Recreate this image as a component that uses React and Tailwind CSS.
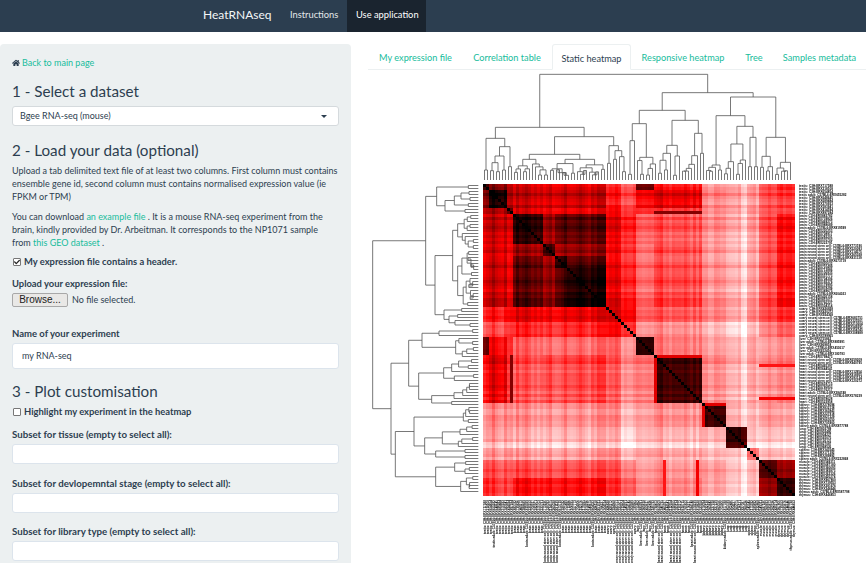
import { FaHome, FaCheck } from "react-icons/fa"

// small seeded generator so the heatmap stays the same between runs
let seed = 1234
const rnd = () => {
    seed = (seed * 16807) % 2147483647
    return seed / 2147483647
}

const CUTS = [0, 2, 8, 10, 20, 24, 28, 41, 51, 57, 73, 81, 88, 92, 98, 104]
const M = [
    [.95, .8, .7, .62, .6, .6, .6, .45, .85, .5, .25, .22, .25, .4, .5],
    [.8, .97, .7, .62, .6, .62, .62, .45, .52, .55, .25, .2, .22, .35, .42],
    [.7, .7, .85, .58, .55, .55, .55, .5, .45, .42, .25, .2, .25, .35, .4],
    [.62, .62, .58, .92, .7, .82, .82, .52, .32, .33, .22, .15, .2, .35, .5],
    [.6, .6, .55, .7, .9, .7, .72, .5, .3, .36, .22, .15, .2, .35, .5],
    [.6, .62, .55, .82, .7, .94, .85, .5, .3, .34, .22, .15, .2, .35, .5],
    [.6, .62, .55, .82, .72, .85, .95, .52, .3, .36, .22, .15, .2, .35, .5],
    [.45, .45, .5, .52, .5, .5, .52, .55, .3, .3, .22, .14, .22, .33, .42],
    [.85, .52, .45, .32, .3, .3, .3, .3, .93, .27, .2, .15, .2, .2, .25],
    [.5, .55, .42, .33, .36, .34, .36, .3, .27, .86, .22, .14, .18, .2, .25],
    [.25, .25, .25, .22, .22, .22, .22, .22, .2, .22, .88, .15, .15, .2, .2],
    [.22, .2, .2, .15, .15, .15, .15, .14, .15, .14, .15, .9, .12, .12, .12],
    [.25, .22, .25, .2, .2, .2, .2, .22, .2, .18, .15, .12, .3, .15, .15],
    [.4, .35, .35, .35, .35, .35, .35, .33, .2, .2, .2, .12, .15, .85, .72],
    [.5, .42, .4, .5, .5, .5, .5, .42, .25, .25, .2, .12, .15, .72, .93],
]

const segOf = (i) => CUTS.findIndex((c, k) => i >= c && i < CUTS[k + 1])

const bias = Array.from({ length: 104 }, (_, i) => (rnd() - 0.5) * (i < 51 ? 0.13 : 0.09))
bias[86] = -0.07
bias[87] = -0.09
bias[59] = 0.07
for (let i = 46; i < 51; i++) bias[i] -= 0.1

const heatColor = (v) => {
    const t = Math.max(0, Math.min(1, v))
    if (t <= 0.5) {
        const g = Math.round(255 * (1 - t / 0.5))
        return `rgb(255,${g},${g})`
    }
    return `rgb(${Math.round(255 * (1 - (t - 0.5) / 0.5))},0,0)`
}

const cellValue = (i, j) => {
    if (i === j) return 1
    const a = Math.min(i, j)
    const b = Math.max(i, j)
    if ((a === 71 || a === 60) && b >= 92) return a === 71 ? 0.52 : 0.46
    if (a === 9 && b >= 57 && b < 73) return 0.74
    const si = segOf(i)
    const sj = segOf(j)
    // the d2 and e blocks have a red rim on their top and left
    if (si === sj && (si === 9 || si === 10) && a === CUTS[si]) return 0.56
    const extra = si === sj ? (bias[i] + bias[j]) * 0.8 : bias[i] + bias[j]
    return M[si][sj] + extra
}

const cells = []
for (let r = 0; r < 104; r++) {
    for (let c = 0; c < 104; c++) {
        cells.push({ r, c, fill: heatColor(cellValue(r, c)) })
    }
}

// dendrogram, heights are in "depth" units, 450 is the leaf line
const auto = (n, parent) => {
    if (n === 1) return 1
    if (n === 2) return [418 + rnd() * 18, 1, 1]
    const top = parent + 8 + rnd() * Math.max(0, (425 - parent) * 0.45)
    const k = 1 + Math.floor(rnd() * (n - 1))
    return [top, auto(k, top), auto(n - k, top)]
}

const TREE = [133,
    [292,
        [325, [420, 1, 1], [350, [378, [398, [422, 1, 1], [425, 1, 1]], [420, 1, 1]], [410, 1, 1]]],
        [320,
            [373, [388, auto(6, 388), auto(6, 388)], [388, auto(9, 388), auto(10, 388)]],
            [347, [400, 1, 1], [362, [388, 1, 1], [380, 1, [425, 1, 1]]]],
        ],
    ],
    [188,
        [241,
            [281, [332, [433, 1, 1], 1], [382, auto(3, 382), auto(4, 382)]],
            [271,
                [346, [370, auto(4, 370), 1], [378, auto(2, 378), 1]],
                [310, [377, auto(5, 377), 1], [370, 1, 1]],
            ],
        ],
        [201,
            [257,
                [405, [412, auto(3, 412), 1], [420, 1, 1]],
                [289,
                    [342, [395, auto(3, 395), 1], [390, auto(3, 390), 1]],
                    [322, [410, 1, 1], [410, 1, 1]],
                ],
            ],
            [322,
                [379, [412, 1, 1], [410, auto(2, 410), 1]],
                [397, auto(5, 397), 1],
            ],
        ],
    ],
]

const toTop = (pos, d) => [484.5 + 3 * pos, 30 + d / 3]
const toLeft = (pos, d) => [365 + (d - 110) / 3, 185.5 + 3 * pos]

const buildTree = () => {
    const links = []
    let leaf = 0
    const walk = (node) => {
        if (node === 1) return { pos: leaf++, d: 450 }
        const a = walk(node[1])
        const b = walk(node[2])
        links.push([a, b, node[0]])
        return { pos: (a.pos + b.pos) / 2, d: node[0] }
    }
    walk(TREE)
    return links
}
const treeLinks = buildTree()

const treePath = (map) =>
    treeLinks
        .map(([a, b, d]) => {
            const p1 = map(a.pos, a.d)
            const p2 = map(a.pos, d)
            const p3 = map(b.pos, d)
            const p4 = map(b.pos, b.d)
            return `M${p1[0]} ${p1[1]}L${p2[0]} ${p2[1]}L${p3[0]} ${p3[1]}L${p4[0]} ${p4[1]}`
        })
        .join("")

// row and column labels, the same sample list on both sides
const TISSUE = ["testis", "testis", "testis", "brain", "brain", "brain", "brain", "ovary", "liver", "heart", "kidney", "lung", "spleen", "muscle", "thymus"]
const sampleLabels = Array.from({ length: 104 }, (_, i) => {
    const id = String(100000 + Math.floor(rnd() * 899999))
    const long = (i >= 20 && i < 25) || (i >= 44 && i < 50) || i === 58 || i === 59 || (i >= 62 && i < 66) || i === 70
    const mid = i % 11 === 3 || (i >= 51 && i < 57 && i % 2 === 0)
    const name = TISSUE[segOf(i)]
    if (long) return `${name} neural stem cell: C57BL6:ERX${id}`
    if (mid) return `${name} adult: C57BL6:ERX${id}`
    return `${name}: C3H:ERX${id}`
})

const Heatmap = () => (
    <svg viewBox="368 70 498 493" className="block w-[498px] h-[493px]">
        <path d={treePath(toTop)} fill="none" stroke="#555" strokeWidth="0.8" />
        <path d={treePath(toLeft)} fill="none" stroke="#555" strokeWidth="0.8" />
        <g shapeRendering="crispEdges">
            {cells.map((cell) => (
                <rect key={cell.r * 104 + cell.c} x={483 + cell.c * 3} y={184 + cell.r * 3} width="3" height="3" fill={cell.fill} />
            ))}
        </g>
        <g fontFamily="'Liberation Sans', sans-serif" fontSize="3.1" fontWeight="700" fill="#000" opacity="0.99">
            {sampleLabels.map((label, i) => (
                <text key={i} x="799" y={187 + i * 3}>{label}</text>
            ))}
            {sampleLabels.map((label, i) => (
                <text key={i} textAnchor="end" transform={`translate(${486 + i * 3} 500) rotate(-90)`}>{label}</text>
            ))}
        </g>
    </svg>
)

const Check = ({ checked }) => (
    <span className="w-[8px] h-[8px] ml-px mr-[3px] bg-white border border-[#777] rounded-[1px] flex items-center justify-center shrink-0">
        {checked && <FaCheck className="w-[6px] h-[6px] text-[#222]" />}
    </span>
)

const Field = ({ label }) => (
    <div className="mb-[12.5px]">
        <p className="text-[9.7px] font-bold leading-[13px] mb-[3px]">{label}</p>
        <div className="h-[20px] bg-white border border-[#dce4ec] rounded-[3px]"></div>
    </div>
)

const Tab = ({ children, width, active }) => (
    <div className={active
        ? `${width} h-[26px] leading-[27px] text-center whitespace-nowrap text-[#2c3e50] bg-white border border-[#ecf0f1] border-b-white rounded-t-[3px]`
        : `${width} h-[25px] leading-[27px] text-center whitespace-nowrap text-[#18bc9c]`}>
        {children}
    </div>
)

const App = () => {
    return (
        <div className="w-[866px] h-[563px] overflow-hidden bg-white text-[#2c3e50] font-[Lato,sans-serif]">
            <nav className="h-[32px] bg-[#2c3e50] flex text-white">
                <div className="ml-[203px] w-[87px] text-[12px] leading-[29px] text-[#f4f6f7]">HeatRNAseq</div>
                <div className="w-[57px] text-[9.3px] leading-[29px] text-[#e4e8ea]">Instructions</div>
                <div className="w-[79px] pl-[9px] bg-[#1a242f] text-[9.3px] leading-[29px]">Use application</div>
            </nav>
            <div className="flex mt-[12px]">
                <aside className="w-[351px] h-[540px] shrink-0 bg-[#ecf0f1] rounded-[4px] px-[12px] pt-[12px]">
                    <p className="text-[9px] leading-[13px] flex items-center">
                        <FaHome className="w-[8px] h-[8px] mr-[2px]" />
                        <span className="text-[#18bc9c]">Back to main page</span>
                    </p>
                    <h3 className="text-[15.2px] leading-[20px] mt-[12px] mb-[5px]">1 - Select a dataset</h3>
                    <div className="h-[20px] bg-white border border-[#d5dadd] rounded-[3px] flex items-center justify-between pl-[7px] pr-[11px] text-[9px]">
                        <span>Bgee RNA-seq (mouse)</span>
                        <span className="border-x-[3px] border-x-transparent border-t-[3px] border-t-[#2c3e50]"></span>
                    </div>
                    <h3 className="text-[15.2px] leading-[20px] mt-[14px] mb-[4px]">2 - Load your data (optional)</h3>
                    <p className="text-[9px] leading-[13px]">
                        Upload a tab delimited text file of at least two columns. First column must contains ensemble gene id, second column must contains normalised expression value (ie FPKM or TPM)
                    </p>
                    <p className="text-[9px] leading-[13px] mt-[7px]">
                        You can download <span className="text-[#18bc9c]">an example file</span> . It is a mouse RNA-seq experiment from the brain, kindly provided by Dr. Arbeitman. It corresponds to the NP1071 sample from <span className="text-[#18bc9c]">this GEO dataset</span> .
                    </p>
                    <label className="flex items-center text-[9.4px] font-bold leading-[13px] mt-[6px]">
                        <Check checked />
                        My expression file contains a header.
                    </label>
                    <p className="text-[9.4px] font-bold leading-[13px] mt-[9px]">Upload your expression file:</p>
                    <div className="flex items-center mt-[3px] text-[9px]">
                        <button className="w-[56px] h-[14px] bg-[#e9e8e6] border border-[#a8a8a8] rounded-[2px] text-[10px] leading-[12px] text-[#222] font-['Liberation_Sans',sans-serif]">Browse...</button>
                        <span className="ml-[4px]">No file selected.</span>
                    </div>
                    <p className="text-[9.5px] font-bold leading-[13px] mt-[20px] mb-[3px]">Name of your experiment</p>
                    <div className="h-[26px] bg-white border border-[#dce4ec] rounded-[3px] flex items-center pl-[9px] text-[9px]">my RNA-seq</div>
                    <h3 className="text-[15.2px] leading-[20px] mt-[12px] mb-[4px]">3 - Plot customisation</h3>
                    <label className="flex items-center text-[9.4px] font-bold leading-[13px]">
                        <Check />
                        Highlight my experiment in the heatmap
                    </label>
                    <div className="mt-[10px]">
                        <Field label="Subset for tissue (empty to select all):" />
                        <Field label="Subset for devlopemntal stage (empty to select all):" />
                        <Field label="Subset for library type (empty to select all):" />
                    </div>
                </aside>
                <main className="ml-[17px] flex-1">
                    <div className="flex text-[9.2px] border-b border-[#ecf0f1] h-[26px] pl-px">
                        <Tab width="w-[93px]">My expression file</Tab>
                        <Tab width="w-[90px]">Correlation table</Tab>
                        <Tab width="w-[79px]" active>Static heatmap</Tab>
                        <Tab width="w-[104px]">Responsive heatmap</Tab>
                        <Tab width="w-[38px]">Tree</Tab>
                        <Tab width="w-[93px]">Samples metadata</Tab>
                    </div>
                    <Heatmap />
                </main>
            </div>
        </div>
    )
}

export default App
